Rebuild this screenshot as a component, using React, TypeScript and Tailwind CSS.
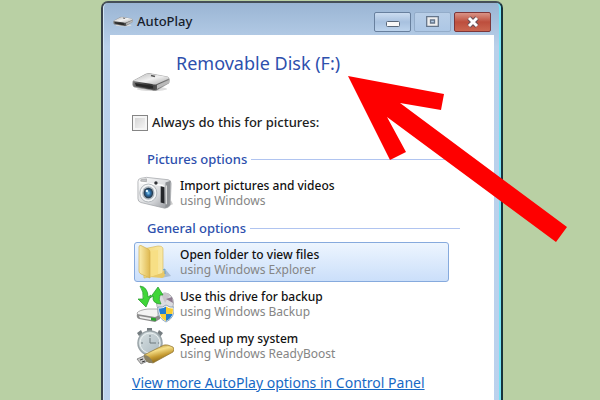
import type { ReactNode } from "react";

function DriveIcon({ className }: { className: string }) {
  return (
    <svg viewBox="0 0 38 20" className={className} aria-hidden="true">
      <defs>
        <linearGradient id="driveTop" x1="0" y1="0" x2="1" y2="1">
          <stop offset="0" stopColor="#b5b5b5" />
          <stop offset="0.5" stopColor="#f1f1f1" />
          <stop offset="1" stopColor="#a9a9a9" />
        </linearGradient>
        <linearGradient id="driveFront" x1="0" y1="0" x2="1" y2="0">
          <stop offset="0" stopColor="#777" />
          <stop offset="0.45" stopColor="#333" />
          <stop offset="1" stopColor="#8b8b8b" />
        </linearGradient>
      </defs>
      <ellipse cx="20" cy="17" rx="15" ry="2" fill="#ddd" />
      <path d="M1 9 L14 2 Q17 1 20 2 L36 5 Q38 6 37 11 L25 18 Q23 19 20 18 L2 15 Q0 14 1 9Z" fill="url(#driveFront)" stroke="#999" strokeWidth="0.6" />
      <path d="M1 9 L14 2 Q17 1 20 2 L36 5 Q38 6 36 7 L25 12 Q23 13 20 12Z" fill="url(#driveTop)" />
      <path d="M3 11 L21 14 V16.5 L4 14Z" fill="#282828" />
      <path d="M25 13 L37 8 V11 L25 17Z" fill="#b9b9b9" />
      <path d="M19 3.5 l4 1" stroke="#555" strokeWidth="1.4" />
    </svg>
  );
}

function CameraIcon() {
  return (
    <svg viewBox="0 0 38 36" className="h-9 w-[36px]" aria-hidden="true">
      <defs>
        <linearGradient id="camBody" x1="0" y1="0" x2="1" y2="1">
          <stop offset="0" stopColor="#fff" />
          <stop offset="0.6" stopColor="#d5d7da" />
          <stop offset="1" stopColor="#8d9095" />
        </linearGradient>
        <radialGradient id="camLens">
          <stop offset="0" stopColor="#8fd4f5" />
          <stop offset="0.45" stopColor="#2b6da8" />
          <stop offset="1" stopColor="#26333f" />
        </radialGradient>
      </defs>
      <path d="M28 33 L38 30 L36 26Z" fill="#ccc" />
      <path d="M1 6 Q1 3 4 2.5 L10 1.5 L33 4 Q36 4.5 36 8 L35 31 Q33 34 29 34 L4 28 Q1 27 1 24Z" fill="url(#camBody)" stroke="#a4a7aa" strokeWidth=".8" />
      <path d="M30 7 L35.5 5 L34.5 31 L30 34Z" fill="#8d9094" />
      <path d="M3 7 L28 10" stroke="#fff" strokeWidth="1.5" />
      <path d="M4 4 l6 -1 v3 l-6 -.5Z" fill="#c4c6c9" stroke="#999" strokeWidth=".6" />
      <circle cx="20" cy="7.5" r="1.8" fill="#303236" />
      <ellipse cx="12" cy="18" rx="9" ry="9.5" fill="#f4f5f6" stroke="#b0b5b9" />
      <ellipse cx="12" cy="18" rx="6.5" ry="7" fill="#aab5be" />
      <ellipse cx="12" cy="18" rx="5" ry="5.5" fill="url(#camLens)" />
      <circle cx="10.5" cy="16" r="1.3" fill="#dff5ff" />
      <path d="M25 11 L29 12 V29 L25 28Z" fill="#24262a" />
      <path d="M31 10 V30" stroke="#e2e2e2" strokeWidth="1.2" />
    </svg>
  );
}

function FolderIcon() {
  return (
    <svg viewBox="0 0 38 36" className="h-9 w-[38px]" aria-hidden="true">
      <defs>
        <linearGradient id="folderBack" x1="0" y1="0" x2="1" y2="0">
          <stop offset="0" stopColor="#f4d878" />
          <stop offset="1" stopColor="#f9e9a5" />
        </linearGradient>
        <linearGradient id="folderFront" x1="0" y1="0" x2="1" y2="0">
          <stop offset="0" stopColor="#fbeeb0" />
          <stop offset="1" stopColor="#dfb84e" />
        </linearGradient>
      </defs>
      <path d="M25 34 L35 32 L30 26Z" fill="#a9bdd2" />
      <path d="M7 5 L22 2 Q27 2 27 5 V30 L8 34Z" fill="url(#folderBack)" stroke="#d9bb62" strokeWidth=".7" />
      <path d="M13 7 L22 6 V31 L13 33Z" fill="#f7df85" />
      <path d="M3 3 Q3 1 5 1.5 L12 5 Q14 6 14 8 V34 L5 30 Q3 29 3 27Z" fill="url(#folderFront)" stroke="#d2b052" strokeWidth=".7" />
      <path d="M14 33 L26 34 Q29 33 29 30 V25 L26 29Z" fill="#e8c866" />
      <path d="M27 26 L29 25 V30" stroke="#629cc8" fill="none" />
    </svg>
  );
}

function BackupIcon() {
  return (
    <svg viewBox="0 0 38 38" className="h-[38px] w-[38px]" aria-hidden="true">
      <ellipse cx="29" cy="18" rx="8.5" ry="10" fill="#dcdce0" stroke="#a0a0a5" strokeWidth=".8" />
      <path d="M29 18 L25 9 Q30 6 34 10Z" fill="#c9c5cb" />
      <path d="M30 14 L36 12 L37 18Z" fill="#8f7c91" />
      <path d="M1 28 Q3 25 12 24 L22 24 V34 L18 34 L3 32Z" fill="#f3f3f3" stroke="#999" strokeWidth=".8" />
      <path d="M1 29 L19 32 L24 30 V34 L19 37 L3 34 Q0 33 1 29Z" fill="#8b8b8b" />
      <path d="M3 31 L15 33 V35 L4 33Z" fill="#eee" />
      <path d="M15 32.5 l5 .8 v2.7 l-5 -.8Z" fill="#27a52b" />
      <path d="M4 1 Q12 2 12 12 L15 10 L10 22 L2 14 L7 14 Q8 7 4 1Z" fill="#3fd637" stroke="#23962a" strokeWidth=".7" />
      <path d="M22 2 L27 10 L24 10 Q22 14 25 19 Q16 19 17 11 L14 13Z" fill="#3fd637" stroke="#23962a" strokeWidth=".7" />
      <path d="M30 20 Q34 23 38 22 Q39 33 30 37 Q21 33 22 22 Q27 23 30 20Z" fill="#fff" stroke="#7794ad" strokeWidth=".8" />
      <path d="M30 21.5 V29 H24 Q23 26 23 23.5 Q27 24 30 21.5Z M30 29 H36.5 Q35 34 30 36Z" fill="#207dcf" />
      <path d="M30 21.5 Q33 24 37 23.5 Q37 26 36.5 29 H30Z M30 29 V36 Q25 34 24 29Z" fill="#f8cd35" />
    </svg>
  );
}

function BoostIcon() {
  return (
    <svg viewBox="0 0 38 38" className="h-[38px] w-[38px]" aria-hidden="true">
      <defs>
        <linearGradient id="gold" x1="0.3" y1="0" x2="0.7" y2="1">
          <stop offset="0" stopColor="#a98227" />
          <stop offset="0.3" stopColor="#f6e08a" />
          <stop offset="0.6" stopColor="#c59a31" />
          <stop offset="1" stopColor="#6d5010" />
        </linearGradient>
        <linearGradient id="watch" x1="0" y1="0" x2="1" y2="1">
          <stop offset="0" stopColor="#d8e0e2" />
          <stop offset="1" stopColor="#a9b8bf" />
        </linearGradient>
      </defs>
      <path d="M11 1 H16 V5 H11Z M1 6 L5 3 L7 7 L3 9Z M21 7 L23 3 L27 6 L24 10Z" fill="#757d81" />
      <circle cx="14" cy="16" r="12" fill="url(#watch)" stroke="#9aa4a8" strokeWidth="1.5" />
      <circle cx="14" cy="16" r="10" fill="none" stroke="#eaf0f0" />
      <path d="M14 8 v2 M5 16 h2 M22 16 h1 M14 16 V11 M14 16 H20" stroke="#6c787d" strokeWidth="1" />
      <path d="M1 32 L10 28 L14 33 L5 37Z" fill="#c6c6c6" stroke="#777" strokeWidth=".8" />
      <path d="M4 33 l3 -1 M6 35 l3 -1" stroke="#333" />
      <path d="M8 28 L28 18 Q31 17 37 20 Q39 22 37 25 L17 36 Q10 35 8 28Z" fill="url(#gold)" stroke="#8c7130" strokeWidth=".7" />
      <path d="M8 28 Q14 28 17 36 L13 36 Q8 34 8 28Z" fill="#8a8163" />
    </svg>
  );
}

function SectionTitle({ children }: { children: string }) {
  return (
    <h2 className="mr-[34px] ml-[37px] flex h-5 items-center gap-1 text-[13px] leading-5 font-medium text-[#2d50ad]">
      {children}
      <span className="h-px flex-1 bg-[#b0c4f0]" />
    </h2>
  );
}

function Option({ icon, title, detail, active = false }: { icon: ReactNode; title: string; detail: string; active?: boolean }) {
  return (
    <button
      type="button"
      className={`mr-[45px] ml-6 flex h-10 items-center gap-[5px] rounded-[3px] border text-left ${
        active ? "border-[#86aadd] bg-linear-to-b from-[#edf5fe] to-[#cbdffa]" : "border-transparent"
      }`}
    >
      <span className="flex w-10 shrink-0 justify-center">{icon}</span>
      <span className="flex flex-col text-[12px] leading-[15px]">
        <span className="font-medium text-[#111]">{title}</span>
        <span className="text-[#858585]">{detail}</span>
      </span>
    </button>
  );
}

const caption = "flex h-5 w-[37px] items-center justify-center rounded-[2px] border";

export default function App() {
  return (
    <main className="flex h-screen justify-center overflow-hidden bg-[#b9d0a4] pt-px pl-1 font-['Noto_Sans','Open_Sans',sans-serif]">
      <section className="relative h-[440px] w-full max-w-[402px] rounded-t-[7px] border-2 border-t-[#454f58] border-r-[#17333c] border-l-[#39434b] bg-linear-to-b from-[#9ab5d4] via-[#b9d0ea] via-10% to-[#bcd2ee]">
        <div className="flex h-full flex-col rounded-t-[5px] border-r-2 border-r-[#76e2f4] border-l border-l-[#d3e5f5] pr-[5px] pl-[6px]">
          <header className="flex h-8 shrink-0 items-center gap-1 pt-[5px] pr-[3px] pl-[3px]">
            <DriveIcon className="h-[11px] w-5" />
            <h1 className="flex-1 text-[13px] font-medium text-[#17202b]">AutoPlay</h1>
            <div className="flex gap-[3px]">
              <button type="button" aria-label="Minimize" className={`${caption} border-[#68809e] bg-linear-to-b from-[#cbdcf0] via-[#a8c1df] to-[#bcd3ec]`}>
                <svg viewBox="0 0 14 6" className="mt-1 h-[6px] w-[14px]"><rect x=".5" y=".5" width="13" height="5" rx="1" fill="#f8f8f8" stroke="#596779" /></svg>
              </button>
              <button type="button" aria-label="Maximize" className={`${caption} border-[#93acc9] bg-linear-to-b from-[#b8cee7] to-[#adc7e5]`}>
                <svg viewBox="0 0 13 11" className="h-[11px] w-[13px]"><path d="M.7 .7 H12.3 V10.3 H.7Z M4.5 4 V7 H8.5 V4Z" fill="#eee" fillRule="evenodd" stroke="#64758a" strokeWidth="1.3" /></svg>
              </button>
              <button type="button" aria-label="Close" className={`${caption} border-[#7d3639] bg-linear-to-b from-[#d99386] via-[#bd4e3d] to-[#ca6650]`}>
                <svg viewBox="0 0 14 12" className="h-3 w-[14px]"><path d="M3 2 L11 10 M11 2 L3 10" stroke="#685057" strokeWidth="5" /><path d="M3 2 L11 10 M11 2 L3 10" stroke="#fff" strokeWidth="3" /></svg>
              </button>
            </div>
          </header>
          <div className="flex flex-1 flex-col bg-white pt-4">
            <div className="flex h-11 gap-[6px] pl-[22px]">
              <DriveIcon className="mt-[21px] h-5 w-[38px]" />
              <h2 className="text-[18px] leading-6 text-[#2d50ad]">Removable Disk (F:)</h2>
            </div>
            <label className="mt-[17px] flex h-[22px] items-center gap-1 pl-[22px] text-[13px] font-medium text-[#222]">
              <input type="checkbox" className="h-4 w-4 appearance-none border border-[#858585] bg-linear-to-br from-[#cfcfcf] to-[#fafafa] shadow-[inset_0_0_0_2px_#f5f5f5]" />
              Always do this for pictures:
            </label>
            <div className="mt-[15px] flex flex-col">
              <SectionTitle>Pictures options</SectionTitle>
              <div className="mt-1 mb-[5px] flex flex-col">
                <Option icon={<CameraIcon />} title="Import pictures and videos" detail="using Windows" />
              </div>
              <SectionTitle>General options</SectionTitle>
              <div className="mt-1 flex flex-col gap-[2px]">
                <Option active icon={<FolderIcon />} title="Open folder to view files" detail="using Windows Explorer" />
                <Option icon={<BackupIcon />} title="Use this drive for backup" detail="using Windows Backup" />
                <Option icon={<BoostIcon />} title="Speed up my system" detail="using Windows ReadyBoost" />
              </div>
            </div>
            <a href="#control-panel" className="mt-[7px] ml-[22px] self-start text-[14px] leading-5 text-[#1769c5] underline">
              View more AutoPlay options in Control Panel
            </a>
          </div>
        </div>
        <svg viewBox="0 0 220 166" className="pointer-events-none absolute top-[73px] left-[245px] h-[166px] w-[220px]" aria-hidden="true">
          <path d="M0 0 L96 18 L93 34 L52 27 L219 151 L208 166 L39 41 L58 76 L42 84Z" fill="#fe0000" />
        </svg>
      </section>
    </main>
  );
}
